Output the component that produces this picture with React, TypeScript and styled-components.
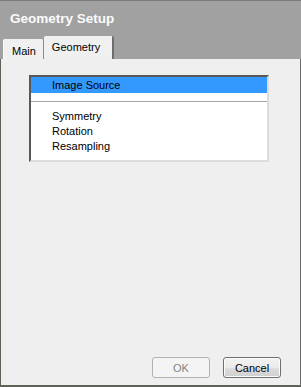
import styled, { createGlobalStyle } from 'styled-components';

const GlobalStyle = createGlobalStyle`
  html, body {
    margin: 0;
    padding: 0;
    background: #efefef;
  }
  * {
    box-sizing: border-box;
  }
`;

const Dialog = styled.div`
  width: 301px;
  height: 387px;
  display: flex;
  flex-direction: column;
  font-family: 'Liberation Sans', Arial, sans-serif;
  font-size: 11px;
  color: #000;
`;

const Header = styled.div`
  height: 59px;
  background: #a1a1a1;
  border-top: 1px solid #7b7b7b;
  display: flex;
  flex-direction: column;
`;

const Title = styled.div`
  padding: 10px 0 0 10px;
  font-size: 13.5px;
  font-weight: bold;
  line-height: 16px;
  color: #fbfbfb;
`;

const TabRow = styled.div`
  margin-top: auto;
  display: flex;
  align-items: flex-end;
  padding-left: 3px;
`;

const Tab = styled.div<{ $active?: boolean }>`
  background: #f0f0f0;
  border-radius: 2px 2px 0 0;
  line-height: 14px;
  height: ${(p) => (p.$active ? '23px' : '20px')};
  padding: ${(p) => (p.$active ? '4px 12px 0 7px' : '5px 7px 0 8px')};
  border-left: 1px solid ${(p) => (p.$active ? '#f0f0f0' : '#fbfbfb')};
  border-right: ${(p) => (p.$active ? '2px solid #6e6e6e' : '1px solid #8c8c8c')};
`;

const Body = styled.div`
  flex: 1;
  background: #efefef;
  border-left: 1px solid #5d6259;
  border-right: 1px solid #6c6c6c;
  border-bottom: 2px solid #5d6259;
  display: flex;
  flex-direction: column;
  padding: 16px 0 0 28px;
`;

const ListBox = styled.div`
  width: 240px;
  height: 87px;
  background: #fff;
  border-top: 2px solid #585858;
  border-left: 2px solid #585858;
  border-right: 2px solid #dcdcdc;
  border-bottom: 2px solid #dcdcdc;
`;

const Item = styled.div<{ $selected?: boolean }>`
  height: ${(p) => (p.$selected ? '16px' : '15px')};
  line-height: ${(p) => (p.$selected ? '16px' : '15px')};
  padding-left: 21px;
  background: ${(p) => (p.$selected ? '#3399ff' : 'transparent')};
`;

const Separator = styled.div`
  height: 16px;
  display: flex;
  align-items: center;
  &::after {
    content: '';
    flex: 1;
    height: 1px;
    background: #a4a4a4;
  }
`;

const ButtonRow = styled.div`
  margin-top: auto;
  margin-bottom: 7px;
  padding-right: 19px;
  display: flex;
  justify-content: flex-end;
  gap: 13px;
`;

const Button = styled.button<{ disabled?: boolean }>`
  width: 58px;
  height: 21px;
  padding: 0;
  font-family: inherit;
  font-size: 11px;
  border-radius: 3px;
  border: 1px solid ${(p) => (p.disabled ? '#adb2b5' : '#707070')};
  color: ${(p) => (p.disabled ? '#838383' : '#000')};
  background: ${(p) =>
    p.disabled ? '#f4f4f4' : 'linear-gradient(to bottom, #f2f2f2 0%, #ebebeb 50%, #dddddd 51%, #cfcfcf 100%)'};
  box-shadow: inset 0 0 0 1px ${(p) => (p.disabled ? '#f4f4f4' : '#fbfbfb')};
`;

export default function App() {
  return (
    <Dialog>
      <GlobalStyle />
      <Header>
        <Title>Geometry Setup</Title>
        <TabRow>
          <Tab>Main</Tab>
          <Tab $active>Geometry</Tab>
        </TabRow>
      </Header>
      <Body>
        <ListBox>
          <Item $selected>Image Source</Item>
          <Separator />
          <Item>Symmetry</Item>
          <Item>Rotation</Item>
          <Item>Resampling</Item>
        </ListBox>
        <ButtonRow>
          <Button disabled>OK</Button>
          <Button>Cancel</Button>
        </ButtonRow>
      </Body>
    </Dialog>
  );
}
